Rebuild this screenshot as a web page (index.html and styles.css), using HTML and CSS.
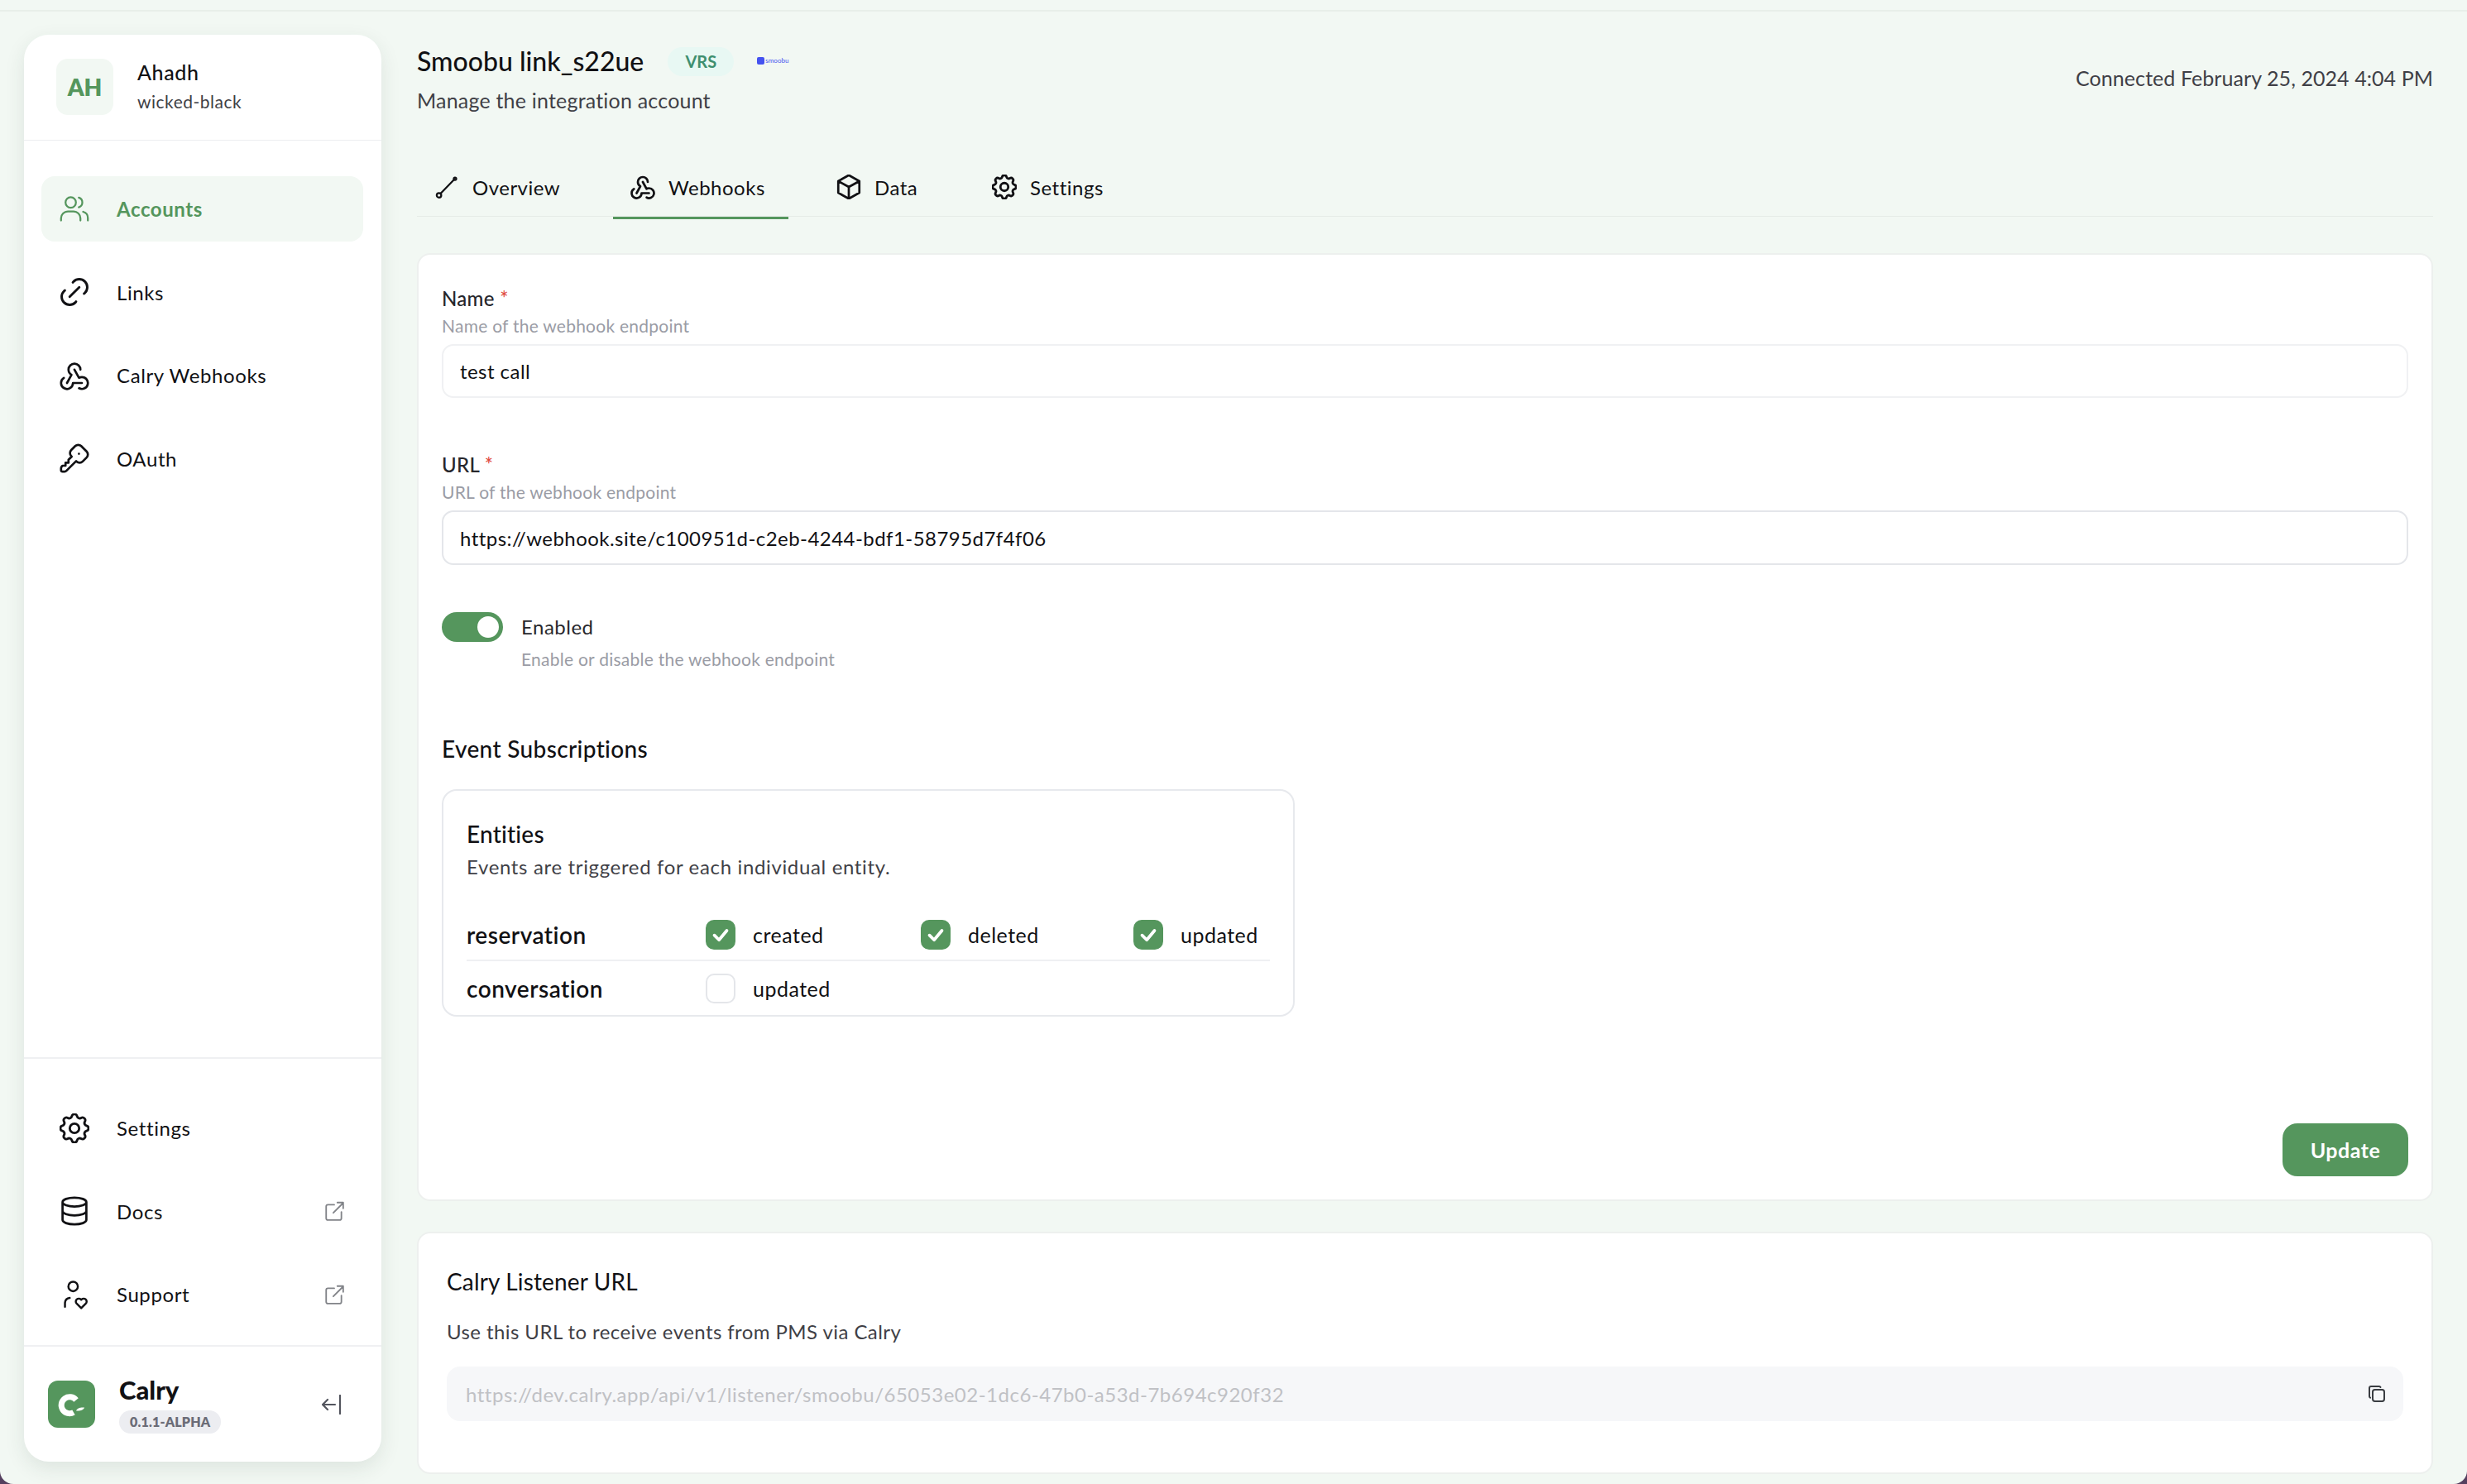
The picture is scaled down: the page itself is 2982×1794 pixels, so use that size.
FILE: index.html
```html
<!DOCTYPE html>
<html lang="en">
<head>
<meta charset="utf-8">
<title>Calry</title>
<link rel="stylesheet" href="styles.css">
</head>
<body>
<svg class="defs" aria-hidden="true">
  <symbol id="i-users" viewBox="0 0 24 24"><circle cx="9" cy="6.500" r="4.200"/><path d="M15.500 2.600a4.100 4.100 0 0 1 0 7.800M1.200 21v-1.800a5.500 5.500 0 0 1 5.500-5.500h4.600a5.500 5.500 0 0 1 5.500 5.500V21M19 14c2.200.6 3.800 2.600 3.800 5v2"/></symbol>
  <symbol id="i-link" viewBox="2.700 2.700 18.600 18.600"><path d="M9 15l6-6M11 6l.463-.536a5 5 0 0 1 7.071 7.072l-.534.464M13 18l-.397.534a5.068 5.068 0 0 1-7.127 0a4.972 4.972 0 0 1 0-7.071l.524-.463"/></symbol>
  <symbol id="i-webhook" viewBox="2 2 20 20"><path d="M4.876 13.610a4 4 0 1 0 6.124 3.390h6M15.066 20.502a4 4 0 1 0 1.934-7.502c-.706 0-1.424.179-2 .5l-3-5.500M16 8a4 4 0 1 0-8 0c0 1.506.77 2.818 2 3.500l-3 5.500"/></symbol>
  <symbol id="i-key" viewBox="2 2 20 20"><path d="M16.555 3.843l3.602 3.602a2.877 2.877 0 0 1 0 4.069l-2.643 2.643a2.877 2.877 0 0 1-4.069 0l-.301-.301l-6.558 6.558a2 2 0 0 1-1.239.578l-.175.008h-1.172a1 1 0 0 1-.993-.883l-.007-.117v-1.172a2 2 0 0 1 .467-1.284l.119-.13l.414-.414h2v-2h2v-2l2.144-2.144l-.301-.301a2.877 2.877 0 0 1 0-4.069l2.643-2.643a2.877 2.877 0 0 1 4.069 0zM15 9h.01"/></symbol>
  <symbol id="i-gear" viewBox="2.500 2.500 19 19"><path d="M10.325 4.317c.426-1.756 2.924-1.756 3.350 0a1.724 1.724 0 0 0 2.573 1.066c1.543-.94 3.310.826 2.370 2.370a1.724 1.724 0 0 0 1.065 2.572c1.756.426 1.756 2.924 0 3.350a1.724 1.724 0 0 0-1.066 2.573c.94 1.543-.826 3.310-2.370 2.370a1.724 1.724 0 0 0-2.572 1.065c-.426 1.756-2.924 1.756-3.350 0a1.724 1.724 0 0 0-2.573-1.066c-1.543.94-3.310-.826-2.370-2.370a1.724 1.724 0 0 0-1.065-2.572c-1.756-.426-1.756-2.924 0-3.350a1.724 1.724 0 0 0 1.066-2.573c-.94-1.543.826-3.310 2.370-2.370c1 .608 2.296.07 2.572-1.065z"/><circle cx="12" cy="12" r="3"/></symbol>
  <symbol id="i-db" viewBox="2.500 2 19 20"><path d="M4 6a8 3 0 1 0 16 0a8 3 0 1 0-16 0M4 6v6a8 3 0 0 0 16 0V6M4 12v6a8 3 0 0 0 16 0v-6"/></symbol>
  <symbol id="i-support" viewBox="2 1 22 22"><path d="M8.500 6a3.500 3.500 0 1 0 7 0a3.500 3.500 0 0 0-7 0M6 21v-3a4 4 0 0 1 3.500-3.500M18 22l3.350-3.284a2.143 2.143 0 0 0 .005-3.071a2.242 2.242 0 0 0-3.129-.006l-.224.22l-.223-.22a2.242 2.242 0 0 0-3.128-.006a2.143 2.143 0 0 0-.006 3.071l3.355 3.296"/></symbol>
  <symbol id="i-ext" viewBox="0 0 24 24"><path d="M12 5H5a2 2 0 0 0-2 2v13a2 2 0 0 0 2 2h13a2 2 0 0 0 2-2v-7M11 14L22 3M15.500 2.500h6.500V9"/></symbol>
  <symbol id="i-line" viewBox="0 0 24 24"><circle cx="4.500" cy="20" r="2.200"/><circle cx="20" cy="4" r="1.200"/><path d="M6 18.400L19 5"/></symbol>
  <symbol id="i-box" viewBox="2 2 20 20"><path d="M12 2.500l8.500 4.800v9.400L12 21.500l-8.500-4.800V7.300L12 2.500M12 12l8.500-4.700M12 12v9.500M12 12L3.500 7.300"/></symbol>
  <symbol id="i-check" viewBox="0 0 24 24"><path d="M6 12.500l4.500 4.500L18 8"/></symbol>
</svg>
<div class="window">
  <div class="topline"></div>
  <div class="app">
    <aside class="sidebar">
      <header class="side-head">
        <div class="avatar">AH</div>
        <div class="who">
          <div class="who-name">Ahadh</div>
          <div class="who-org">wicked-black</div>
        </div>
      </header>
      <nav class="nav nav-top">
        <a class="nav-item active"><svg class="ico"><use href="#i-users"/></svg><span>Accounts</span></a>
        <a class="nav-item"><svg class="ico"><use href="#i-link"/></svg><span>Links</span></a>
        <a class="nav-item"><svg class="ico"><use href="#i-webhook"/></svg><span>Calry Webhooks</span></a>
        <a class="nav-item"><svg class="ico"><use href="#i-key"/></svg><span>OAuth</span></a>
      </nav>
      <nav class="nav nav-bottom">
        <a class="nav-item"><svg class="ico"><use href="#i-gear"/></svg><span>Settings</span></a>
        <a class="nav-item"><svg class="ico"><use href="#i-db"/></svg><span>Docs</span><svg class="ext"><use href="#i-ext"/></svg></a>
        <a class="nav-item"><svg class="ico"><use href="#i-support"/></svg><span>Support</span><svg class="ext"><use href="#i-ext"/></svg></a>
      </nav>
      <footer class="side-foot">
        <svg class="logo" viewBox="0 0 57 57"><rect width="57" height="57" rx="12" fill="#55965d"/><path d="M34 23.500A10 10 0 1 0 31 38.500" fill="none" stroke="#fff" stroke-width="7"/><path d="M34 36.500c1-3 5-4.500 10-4c-1 3-5 4.500-10 4z" fill="#fff"/></svg>
        <div class="brand">
          <div class="brand-name">Calry</div>
          <div class="brand-ver">0.1.1-ALPHA</div>
        </div>
        <svg class="collapse" viewBox="0 0 24 24"><path d="M1 12h15M1 12l6 6M1 12l6-6M22 1v22"/></svg>
      </footer>
    </aside>
    <main class="main">
      <header class="page-head">
        <div>
          <div class="title-row">
            <h1 class="title">Smoobu link_s22ue</h1>
            <span class="vrs">VRS</span>
            <span class="smoobu"><i class="smoobu-mark"></i><span class="smoobu-word">smoobu</span></span>
          </div>
          <p class="subtitle">Manage the integration account</p>
        </div>
        <div class="connected">Connected February 25, 2024 4:04 PM</div>
      </header>
      <div class="tabs">
        <a class="tab tab-overview"><svg class="tab-ico"><use href="#i-line"/></svg>Overview</a>
        <a class="tab tab-webhooks selected"><svg class="tab-ico"><use href="#i-webhook"/></svg>Webhooks</a>
        <a class="tab tab-data"><svg class="tab-ico"><use href="#i-box"/></svg>Data</a>
        <a class="tab tab-settings"><svg class="tab-ico"><use href="#i-gear"/></svg>Settings</a>
      </div>
      <section class="card form-card">
        <div class="field">
          <label class="label">Name <span class="req">*</span></label>
          <div class="hint">Name of the webhook endpoint</div>
          <div class="input faint">test call</div>
        </div>
        <div class="field field-url">
          <label class="label">URL <span class="req">*</span></label>
          <div class="hint">URL of the webhook endpoint</div>
          <div class="input">https://webhook.site/c100951d-c2eb-4244-bdf1-58795d7f4f06</div>
        </div>
        <div class="switch-row">
          <span class="switch"><i class="knob"></i></span>
          <div>
            <div class="switch-label">Enabled</div>
            <div class="hint switch-hint">Enable or disable the webhook endpoint</div>
          </div>
        </div>
        <h2 class="section-title">Event Subscriptions</h2>
        <div class="entities">
          <h3 class="ent-title">Entities</h3>
          <p class="ent-desc">Events are triggered for each individual entity.</p>
          <div class="ent-row first">
            <span class="ent-name">reservation</span>
            <span class="opt"><span class="box on"><svg class="check"><use href="#i-check"/></svg></span>created</span>
            <span class="opt"><span class="box on"><svg class="check"><use href="#i-check"/></svg></span>deleted</span>
            <span class="opt"><span class="box on"><svg class="check"><use href="#i-check"/></svg></span>updated</span>
          </div>
          <div class="ent-row last">
            <span class="ent-name">conversation</span>
            <span class="opt"><span class="box"></span>updated</span>
          </div>
        </div>
        <div class="actions"><button class="btn">Update</button></div>
      </section>
      <section class="card listener-card">
        <h2 class="listener-title">Calry Listener URL</h2>
        <p class="listener-desc">Use this URL to receive events from PMS via Calry</p>
        <div class="listener-input">
          <span>https://dev.calry.app/api/v1/listener/smoobu/65053e02-1dc6-47b0-a53d-7b694c920f32</span>
          <svg class="copy" viewBox="0 0 24 24"><path d="M7 9.667A2.667 2.667 0 0 1 9.667 7h8.666A2.667 2.667 0 0 1 21 9.667v8.666A2.667 2.667 0 0 1 18.333 21H9.667A2.667 2.667 0 0 1 7 18.333zM4.012 16.737A2.005 2.005 0 0 1 3 15V5c0-1.100.900-2 2-2h10c.750 0 1.158.385 1.500 1"/></svg>
        </div>
      </section>
    </main>
  </div>
</div>
</body>
</html>
```

FILE: styles.css
```css
* { box-sizing: border-box; }
html, body { margin: 0; padding: 0; height: 100%; }
body {
  background: #55405f;
  font-family: "Lato", "Noto Sans", sans-serif;
  color: #111114;
  overflow: hidden;
}
.defs { position: absolute; width: 0; height: 0; }
.window {
  width: 2982px;
  height: 1794px;
  background: #f2f8f3;
  border-radius: 0 0 16px 16px;
  overflow: hidden;
}
.topline { height: 14px; border-bottom: 2px solid #e8efe9; }
.app { display: flex; padding: 28px 41px 0 29px; gap: 43px; height: 1780px; }

/* sidebar */
.sidebar {
  flex: 0 0 432px;
  height: 1725px;
  background: #fff;
  border-radius: 30px;
  box-shadow: 0 8px 24px rgba(40, 60, 45, .1);
  display: flex;
  flex-direction: column;
}
.side-head {
  height: 128px;
  flex: none;
  display: flex;
  align-items: center;
  gap: 29px;
  padding: 0 39px 2px;
  border-bottom: 1px solid #eceef0;
}
.avatar {
  width: 69px; height: 68px;
  border-radius: 14px;
  background: #f2f8f3;
  color: #55965d;
  font-weight: 800;
  font-size: 28px;
  display: flex; align-items: center; justify-content: center;
}
.who-name { font-size: 25px; font-weight: 500; line-height: 34px; letter-spacing: .6px; }
.who-org { font-size: 21px; color: #3f3f46; line-height: 32px; margin-top: 3px; letter-spacing: .5px; }
.nav { display: flex; flex-direction: column; gap: 21.500px; padding: 43px 22px 22px 21px; }
.nav-top { flex: 1; }
.nav-bottom { border-top: 2px solid #eff0f2; padding-top: 44px; }
.nav-item {
  height: 79px;
  flex: none;
  display: flex;
  align-items: center;
  padding: 0 22px;
  border-radius: 16px;
  font-size: 24px;
  letter-spacing: .6px;
  color: #111114;
}
.nav-item.active { background: #f2f8f3; color: #55965d; font-weight: 700; }
.ico {
  width: 36px; height: 36px;
  margin-right: 33px;
  flex: none;
  fill: none; stroke: currentColor; stroke-width: 1.500; stroke-linecap: round; stroke-linejoin: round;
}
.ext {
  width: 26px; height: 26px;
  margin-left: auto;
  fill: none; stroke: #818388; stroke-width: 1.700; stroke-linecap: round; stroke-linejoin: round;
}
.side-foot {
  flex: none;
  height: 141px;
  display: flex;
  align-items: center;
  padding: 0 48px 0 29px;
  border-top: 2px solid #eff0f2;
}
.logo { width: 57px; height: 57px; flex: none; margin-right: 29px; }
.brand { flex: 1; }
.brand-name { font-size: 31px; font-weight: 900; line-height: 36px; }
.brand-ver {
  display: inline-block;
  margin-top: 7px;
  height: 28px;
  line-height: 28px;
  padding: 0 13px;
  border-radius: 14px;
  background: #ecedf1;
  color: #6b6c77;
  font-size: 16px;
  font-weight: 800;
  letter-spacing: .2px;
}
.collapse { width: 24px; height: 24px; fill: none; stroke: #53555e; stroke-width: 2.200; stroke-linecap: round; stroke-linejoin: round; }

/* main */
.main { flex: 1; min-width: 0; }
.page-head { display: flex; justify-content: space-between; align-items: center; padding-top: 12px; }
.title-row { display: flex; align-items: center; height: 40px; }
.title { margin: 0; font-size: 32px; font-weight: 500; line-height: 40px; letter-spacing: 0; }
.vrs {
  width: 80px; height: 35px; margin-left: 29px;
  border-radius: 18px;
  background: #e8f8f3;
  color: #3f8f6f;
  font-size: 20px;
  font-weight: 700;
  display: flex; align-items: center; justify-content: center;
}
.smoobu { display: flex; align-items: center; gap: 1px; margin-left: 28px; margin-top: -2px; }
.smoobu-mark { width: 9px; height: 9px; background: #4452f0; border-radius: 2px; }
.smoobu-word { font-size: 8px; line-height: 9px; color: #4452f0; }
.subtitle { margin: 11px 0 0; font-size: 25px; line-height: 32px; color: #3f3f46; letter-spacing: .2px; }
.connected { font-size: 25px; color: #3f3f46; margin-top: -3px; letter-spacing: .07px; }

.tabs { display: flex; height: 77px; margin-top: 48px; border-bottom: 1px solid #e6ece7; position: relative; }
.tab {
  display: flex; align-items: center;
  height: 80px;
  font-size: 24px;
  letter-spacing: .5px;
  padding-top: 5px;
  border-bottom: 3px solid transparent;
}
.tab-overview { padding-left: 21px; width: 237px; }
.tab-webhooks { padding-left: 21px; width: 212px; }
.tab-webhooks.selected { border-bottom-color: #55965d; }
.tab-data { margin-left: 58px; width: 188px; }
.tab-ico {
  width: 30px; height: 30px; margin-right: 16px; flex: none;
  fill: none; stroke: #111114; stroke-width: 1.800; stroke-linecap: round; stroke-linejoin: round;
}

.card { background: #fff; border: 2px solid #edf0ee; border-radius: 16px; }
.form-card { margin-top: 44px; height: 1146px; padding: 38px 28px 0; display: flex; flex-direction: column; }
.field { display: block; }
.field-url { margin-top: 66px; }
.label { display: block; font-size: 24px; line-height: 30px; font-weight: 500; color: #27272c; letter-spacing: .3px; }
.req { color: #e04a3f; }
.hint { font-size: 21px; line-height: 24px; margin-top: 6px; color: #9a9ca5; letter-spacing: .25px; }
.input {
  margin-top: 10px;
  height: 66px;
  border: 2px solid #e4e6ea;
  border-radius: 14px;
  padding: 0 20px;
  display: flex; align-items: center;
  font-size: 24px;
  letter-spacing: .45px;
  color: #111114;
}
.input.faint { border-color: #f0f1f3; height: 65px; }
.switch-row { display: flex; margin-top: 57px; gap: 22px; }
.switch { width: 74px; height: 36px; border-radius: 18px; background: #55965d; position: relative; flex: none; }
.knob { position: absolute; right: 5px; top: 5px; width: 26px; height: 26px; border-radius: 50%; background: #fff; }
.switch-label { font-size: 24px; line-height: 36px; letter-spacing: .5px; color: #27272c; }
.switch-hint { margin-top: 9px; }
.section-title { margin: 78px 0 0; font-size: 28px; line-height: 36px; font-weight: 500; letter-spacing: .35px; }
.entities {
  width: 1031px;
  height: 275px;
  margin-top: 31px;
  border: 2px solid #e7e9ed;
  border-radius: 18px;
  padding: 34px 28px 0;
}
.ent-title { margin: 0; font-size: 28px; line-height: 36px; font-weight: 500; letter-spacing: .2px; }
.ent-desc { margin: 6px 0 0; font-size: 24px; line-height: 32px; color: #3f3f46; letter-spacing: .65px; }
.ent-row { display: grid; grid-template-columns: 289px 260px 257px auto; align-items: center; }
.ent-row.first { height: 63px; margin-top: 35px; border-bottom: 2px solid #eff0f2; }
.ent-row.last { height: 66px; }
.ent-name { font-size: 28px; font-weight: 600; letter-spacing: .5px; }
.opt { display: flex; align-items: center; gap: 21px; font-size: 25px; letter-spacing: .5px; }
.box { width: 36px; height: 36px; border-radius: 10px; border: 2px solid #e4e6ea; flex: none; }
.box.on { background: #55965d; border-color: #55965d; display: flex; align-items: center; justify-content: center; }
.check { width: 30px; height: 30px; fill: none; stroke: #fff; stroke-width: 3; stroke-linecap: round; stroke-linejoin: round; }
.actions { margin-top: auto; padding-bottom: 28px; display: flex; justify-content: flex-end; }
.btn {
  width: 152px; height: 64px;
  border: 0; border-radius: 18px;
  background: #55965d; color: #fff;
  font: 700 25px "Lato", sans-serif;
  letter-spacing: .5px;
}

.listener-card { margin-top: 37px; height: 293px; padding: 40px 34px 0; }
.listener-title { margin: 0; font-size: 28px; line-height: 36px; font-weight: 400; letter-spacing: .15px; }
.listener-desc { margin: 27px 0 0; font-size: 24px; line-height: 32px; color: #3f3f46; letter-spacing: .42px; }
.listener-input {
  margin-top: 26px;
  height: 66px;
  background: #f6f7f9;
  border-radius: 16px;
  padding: 0 20px 0 23px;
  display: flex; align-items: center; justify-content: space-between;
  font-size: 24px;
  color: #c0c1c5;
  letter-spacing: .5px;
}
.copy { width: 24px; height: 24px; fill: none; stroke: #3a3d42; stroke-width: 2; stroke-linecap: round; stroke-linejoin: round; }
```
